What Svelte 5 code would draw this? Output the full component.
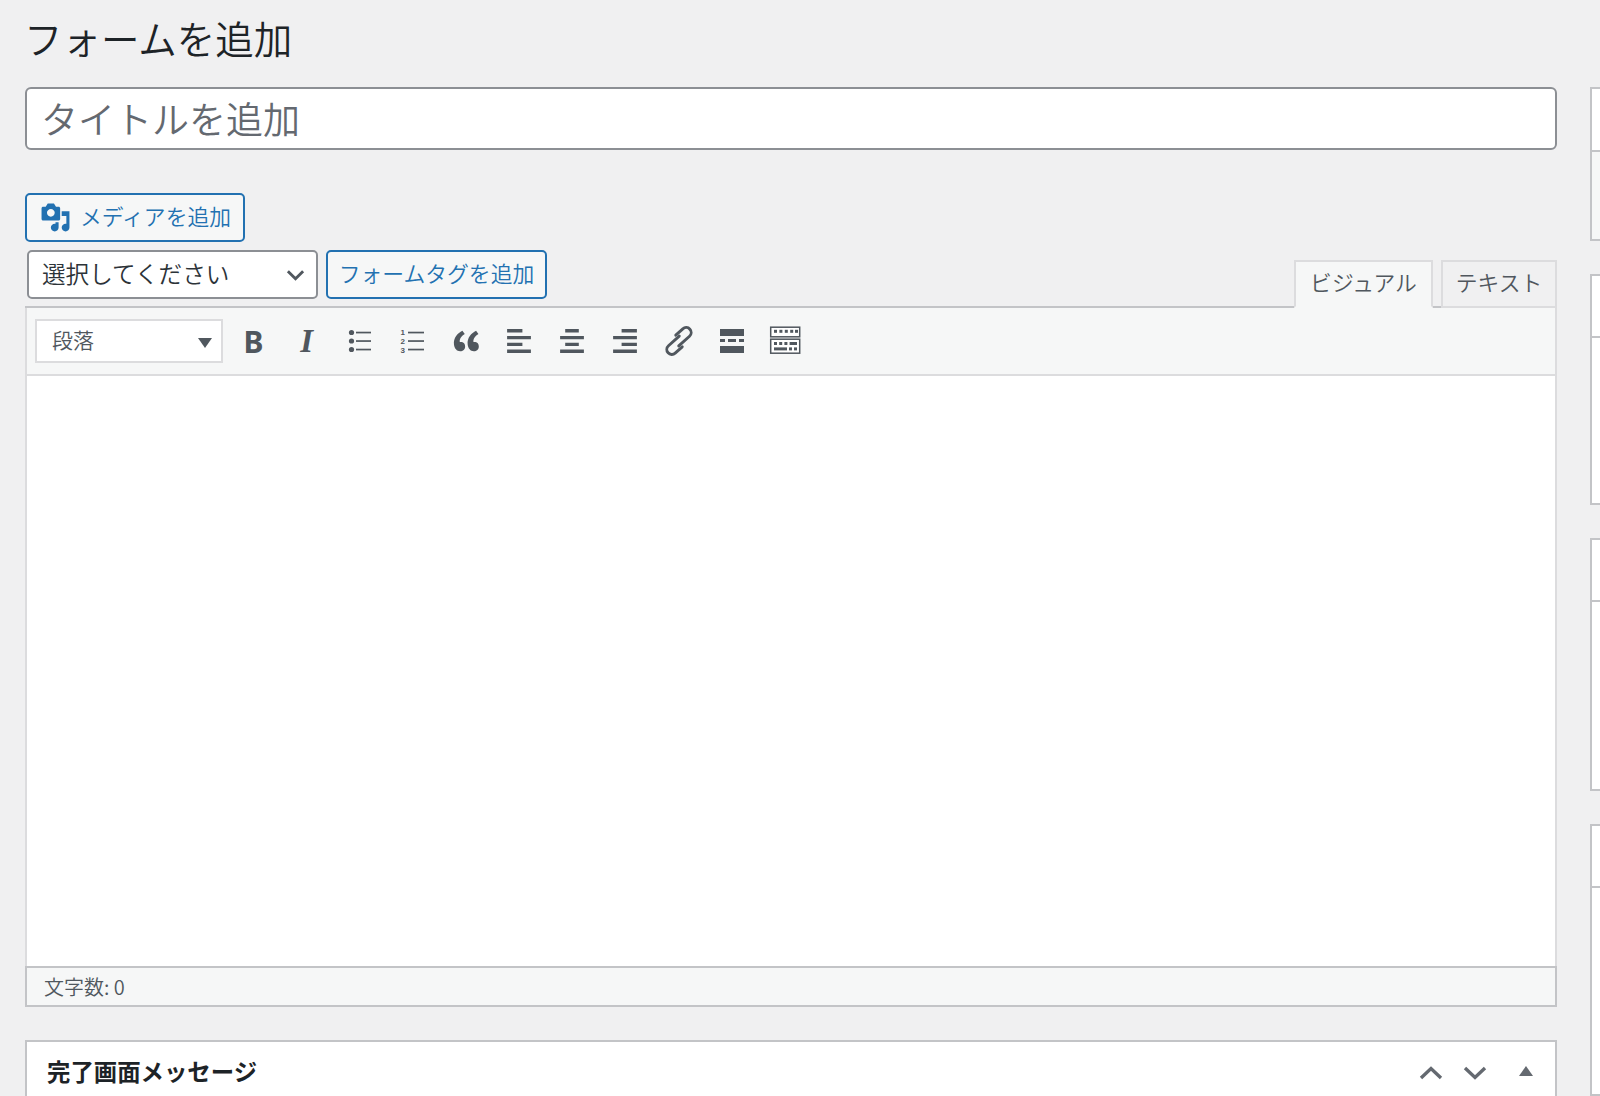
<script>
  const tools = [
    "bold", "italic", "ul", "ol", "quote", "left", "center", "right", "link", "hr", "sink"
  ];
  const paths = {
    quote: "M9.49 13.22c0-.74-.2-1.38-.61-1.9-.62-.78-1.83-.88-2.53-.72-.29-1.65 1.11-3.75 2.92-4.65L7.88 4c-2.73 1.3-5.42 4.28-4.96 8.05C3.21 14.43 4.59 16 6.54 16c.85 0 1.56-.25 2.12-.75s.83-1.18.83-2.03zm8.05 0c0-.74-.2-1.38-.61-1.9-.63-.78-1.83-.88-2.53-.72-.29-1.65 1.11-3.75 2.92-4.65L15.93 4c-2.73 1.3-5.41 4.28-4.95 8.05.29 2.38 1.66 3.95 3.61 3.95.85 0 1.56-.25 2.12-.75s.83-1.18.83-2.03z",
    left: "M12 5V3H3v2h9zm5 4V7H3v2h14zm-5 4v-2H3v2h9zm5 4v-2H3v2h14z",
    center: "M14 5V3H6v2h8zm3 4V7H3v2h14zm-3 4v-2H6v2h8zm3 4v-2H3v2h14z",
    right: "M17 5V3H8v2h9zm0 4V7H3v2h14zm0 4v-2H8v2h9zm0 4v-2H3v2h14z"
  };
  const sideBoxes = [
    { height: 154, head: 63, grey: true },
    { height: 231, head: 62 },
    { height: 254, head: 62 },
    { height: 272, head: 62 }
  ];
  const sinkDots = [
    [6, 5.8, 3], [11.4, 5.8, 3], [16.8, 5.8, 3], [22.2, 5.8, 3], [27, 5.8, 3],
    [6, 18, 3], [11.2, 18, 3], [16.4, 18, 3],
    [21, 23.4, 3], [26, 23.4, 3]
  ];
</script>

<div class="page">
  <main class="main">
    <h1>フォームを追加</h1>
    <input class="title" type="text" placeholder="タイトルを追加" />

    <div class="media-row">
      <button class="btn media" type="button">
        <svg class="media-icon" viewBox="0 0 20 20" fill="#2271b1">
          <path d="M13 11V4c0-.55-.45-1-1-1h-1.67L9 1H5L3.67 3H2c-.55 0-1 .45-1 1v7c0 .55.45 1 1 1h10c.55 0 1-.45 1-1zM7 4.5c1.38 0 2.5 1.12 2.5 2.5S8.38 9.5 7 9.5 4.5 8.38 4.5 7 5.62 4.5 7 4.5zM14 6h5v10.5c0 1.38-1.12 2.5-2.5 2.5S14 17.88 14 16.5s1.12-2.5 2.5-2.5c.17 0 .34.02.5.05V9h-3V6zm-4 8.05V13h2v3.5c0 1.38-1.12 2.5-2.5 2.5S7 17.88 7 16.5 8.12 14 9.5 14c.17 0 .34.02.5.05z" />
        </svg>
        <span class="lift">メディアを追加</span>
      </button>
    </div>

    <div class="tools">
      <div class="tools-left">
        <div class="select">
          <span class="lift">選択してください</span>
          <svg class="chevron" viewBox="0 0 20 12" fill="none" stroke="#50575e" stroke-width="3">
            <polyline points="2,2 10,10 18,2" />
          </svg>
        </div>
        <button class="btn tag" type="button"><span class="lift more">フォームタグを追加</span></button>
      </div>
      <div class="tabs">
        <button class="tab active" type="button"><span class="lift more">ビジュアル</span></button>
        <button class="tab" type="button"><span class="lift more">テキスト</span></button>
      </div>
    </div>

    <div class="editor">
      <div class="toolbar">
        <div class="format">
          <span class="lift">段落</span>
          <i class="caret"></i>
        </div>
        {#each tools as t}
          <div class="tool">
            {#if t === "bold"}
              <span class="glyph-b">B</span>
            {:else if t === "italic"}
              <span class="glyph-i">I</span>
            {:else if paths[t]}
              <svg class="ico" viewBox="0 0 20 20" fill="#50575e"><path d={paths[t]} /></svg>
            {:else if t === "ul"}
              <svg class="ico" viewBox="0 0 34 34" fill="#50575e">
                <circle cx="8.5" cy="8.5" r="2.6" /><circle cx="8.5" cy="17" r="2.6" /><circle cx="8.5" cy="25.5" r="2.6" />
                <rect x="13" y="7.7" width="15" height="1.7" /><rect x="13" y="16.2" width="15" height="1.7" /><rect x="13" y="24.7" width="15" height="1.7" />
              </svg>
            {:else if t === "ol"}
              <svg class="ico" viewBox="0 0 34 34" fill="#50575e">
                <text x="4.6" y="11" class="num">1</text><text x="4.6" y="20" class="num">2</text><text x="4.6" y="29" class="num">3</text>
                <rect x="12" y="7.7" width="16" height="1.7" /><rect x="12" y="16.2" width="16" height="1.7" /><rect x="12" y="24.7" width="16" height="1.7" />
              </svg>
            {:else if t === "link"}
              <svg class="ico" viewBox="-1 0 34 34" fill="none" stroke="#50575e" stroke-width="2.9" stroke-linecap="round">
                <g transform="rotate(-42 17 17)">
                  <path d="M13.5 20.5H28a5 5 0 0 0 0-10H18.5" />
                  <path d="M20.5 13.5H6a5 5 0 0 0 0 10H15.5" />
                </g>
              </svg>
            {:else if t === "hr"}
              <svg class="ico" viewBox="-1 0 34 34" fill="#50575e">
                <rect x="5" y="5" width="24" height="7" />
                <rect x="5" y="15" width="5" height="3" /><rect x="13" y="15" width="8" height="3" /><rect x="24" y="15" width="5" height="3" />
                <rect x="5" y="22" width="24" height="7" />
              </svg>
            {:else if t === "sink"}
              <svg class="ico" viewBox="-1 0 34 34" fill="#fff" stroke="#50575e" stroke-width="1.5">
                <rect x="2.7" y="3.2" width="29" height="9.6" />
                <rect x="2.7" y="15.2" width="29" height="14" />
                <g fill="#50575e" stroke="none">
                  {#each sinkDots as [x, y, s]}
                    <rect {x} {y} width={s} height={s} />
                  {/each}
                  <rect x="21.6" y="18" width="7.4" height="3" />
                  <rect x="6" y="23.4" width="13" height="3" />
                </g>
              </svg>
            {/if}
          </div>
        {/each}
      </div>
      <div class="content"></div>
      <div class="status">文字数: 0</div>
    </div>

    <section class="postbox">
      <h2>完了画面メッセージ</h2>
      <div class="handles">
        <svg class="handle" viewBox="0 0 24 14" fill="none" stroke="#646970" stroke-width="3.4">
          <polyline points="2,12 12,2.5 22,12" />
        </svg>
        <svg class="handle" viewBox="0 0 24 14" fill="none" stroke="#646970" stroke-width="3.4">
          <polyline points="2,2 12,11.5 22,2" />
        </svg>
        <i class="toggle"></i>
      </div>
    </section>
  </main>

  <aside class="side">
    {#each sideBoxes as b}
      <div class="side-box" class:grey={b.grey} style="height: {b.height}px">
        <div class="side-head" style="height: {b.head}px"></div>
      </div>
    {/each}
  </aside>
</div>

<style>
  :global(body) {
    background: #f0f0f1;
  }

  .page {
    display: flex;
    height: 1096px;
    overflow: hidden;
    padding-left: 25px;
    background: #f0f0f1;
    font-family: "Noto Sans CJK JP", "Noto Sans", sans-serif;
    font-weight: 350;
    color: #2c3338;
  }

  .main {
    flex: none;
    width: 1532px;
  }

  /* text sits a little high in the reference's font */
  .lift {
    display: block;
    margin-top: -4px;
  }

  .lift.more {
    margin-top: -5px;
  }

  h1 {
    margin: 0 0 23px -1px;
    padding-top: 11px;
    height: 53px;
    line-height: 52px;
    font-size: 38.5px;
    font-weight: 350;
    color: #1d2327;
  }

  .title {
    display: block;
    box-sizing: border-box;
    width: 100%;
    height: 63px;
    margin-bottom: 43px;
    padding: 0 14px 1px;
    border: 2px solid #8c8f94;
    border-radius: 6px;
    background: #fff;
    font: 350 37px "Noto Sans CJK JP", sans-serif;
  }

  .title::placeholder {
    color: #646970;
    opacity: 1;
  }

  .btn {
    box-sizing: border-box;
    height: 49px;
    border: 2px solid #2271b1;
    border-radius: 5px;
    background: #f6f7f7;
    color: #2271b1;
    font: 350 21.8px "Noto Sans CJK JP", sans-serif;
    padding: 0;
  }

  .media-row {
    height: 57px;
  }

  .media {
    display: flex;
    align-items: center;
    width: 220px;
    padding-left: 13px;
    gap: 9px;
  }

  .media-icon {
    width: 31px;
    height: 31px;
    flex: none;
  }

  .tools {
    display: flex;
    justify-content: space-between;
    height: 56px;
    border-bottom: 2px solid #c3c4c7;
  }

  .tools-left {
    display: flex;
    gap: 8px;
    padding-left: 2px;
    height: 49px;
  }

  .select {
    box-sizing: border-box;
    width: 291px;
    height: 49px;
    display: flex;
    align-items: center;
    justify-content: space-between;
    padding: 0 11px 0 13px;
    border: 2px solid #8c8f94;
    border-radius: 5px;
    background: #fff;
    font-size: 23.6px;
  }

  .chevron {
    width: 19px;
    height: 12px;
  }

  .tag {
    width: 221px;
  }

  .tabs {
    display: flex;
    align-items: flex-end;
    gap: 8px;
    align-self: flex-end;
    margin-bottom: -2px;
  }

  .tab {
    box-sizing: border-box;
    height: 48px;
    padding: 0;
    border: 2px solid #dcdcde;
    background: #f0f0f1;
    color: #50575e;
    font: 350 21.8px "Noto Sans CJK JP", sans-serif;
    width: 116px;
  }

  .tab.active {
    width: 139px;
    background: #f6f7f7;
    border-bottom-color: #f6f7f7;
  }

  .editor {
    border-left: 2px solid #dcdcde;
    border-right: 2px solid #dcdcde;
  }

  .toolbar {
    display: flex;
    align-items: center;
    box-sizing: border-box;
    height: 68px;
    padding-left: 8px;
    background: #f6f7f7;
    border-bottom: 2px solid #dcdcde;
  }

  .format {
    box-sizing: border-box;
    flex: none;
    width: 188px;
    height: 44px;
    margin-right: 4px;
    display: flex;
    align-items: center;
    justify-content: space-between;
    padding: 0 9px 0 15px;
    border: 2px solid #dcdcde;
    background: #fff;
    font-size: 21px;
    color: #50575e;
  }

  .caret {
    width: 0;
    height: 0;
    margin-top: 4px;
    border-left: 7px solid transparent;
    border-right: 7px solid transparent;
    border-top: 10px solid #50575e;
  }

  .tool {
    flex: none;
    width: 53.1px;
    height: 53px;
    display: flex;
    align-items: center;
    justify-content: center;
  }

  .ico {
    width: 34px;
    height: 34px;
  }

  .num {
    font: 700 8px "Liberation Sans", sans-serif;
    fill: #50575e;
    stroke: none;
  }

  .glyph-b {
    font: 700 30px "Noto Sans", sans-serif;
    color: #50575e;
  }

  .glyph-i {
    font: italic 700 33px "Liberation Serif", serif;
    color: #50575e;
  }

  .content {
    height: 590px;
    background: #fff;
  }

  .status {
    box-sizing: border-box;
    height: 41px;
    margin: 0 -2px;
    padding-left: 17px;
    display: flex;
    align-items: center;
    border: 2px solid #c3c4c7;
    background: #f6f7f7;
    font-size: 20px;
    color: #50575e;
  }

  .postbox {
    box-sizing: border-box;
    display: flex;
    justify-content: space-between;
    align-items: flex-start;
    height: 100px;
    margin-top: 33px;
    padding: 12px 22px 0 20px;
    border: 2px solid #c3c4c7;
    background: #fff;
  }

  h2 {
    margin: 0;
    font-size: 23.4px;
    line-height: 34px;
    font-weight: 700;
    color: #1d2327;
  }

  .handles {
    display: flex;
    align-items: center;
    gap: 20px;
    height: 38px;
  }

  .handle {
    width: 24px;
    height: 14px;
  }

  .toggle {
    width: 0;
    height: 0;
    margin-left: 12px;
    margin-top: -5px;
    border-left: 7.5px solid transparent;
    border-right: 7.5px solid transparent;
    border-bottom: 10px solid #646970;
  }

  .side {
    flex: none;
    width: 400px;
    margin-left: 33px;
    padding-top: 87px;
    display: flex;
    flex-direction: column;
    gap: 33px;
  }

  .side-box {
    box-sizing: border-box;
    border: 2px solid #c3c4c7;
    background: #fff;
  }

  .side-box.grey {
    background: #f6f7f7;
  }

  .side-head {
    box-sizing: border-box;
    background: #fff;
    border-bottom: 2px solid #c3c4c7;
  }
</style>
